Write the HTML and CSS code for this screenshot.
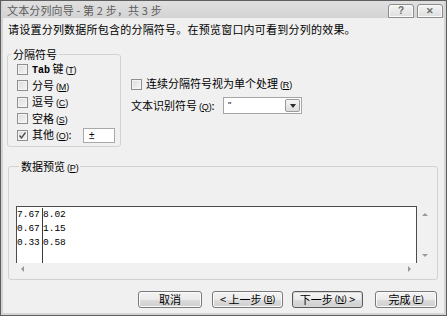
FILE: index.html
```html
<!DOCTYPE html>
<html lang="zh-CN">
<head>
<meta charset="utf-8">
<title>文本分列向导</title>
<link rel="stylesheet" href="styles.css">
</head>
<body>
<div class="window">
  <div class="titlebar">
    <span class="title">文本分列向导 - 第 2 步，共 3 步</span>
    <div class="tbtns">
      <span class="tbtn">?</span>
      <span class="tbtn close">✕</span>
    </div>
  </div>
  <div class="content">
    <p class="intro">请设置分列数据所包含的分隔符号。在预览窗口内可看到分列的效果。</p>
    <div class="top">
      <fieldset class="group delim">
        <legend>分隔符号</legend>
        <div class="rows">
          <div class="row"><span class="cb"></span><span class="lbl"><span class="lat">Tab</span> 键<span class="mn">(<u>T</u>)</span></span></div>
          <div class="row"><span class="cb"></span><span class="lbl">分号<span class="mn">(<u>M</u>)</span></span></div>
          <div class="row"><span class="cb"></span><span class="lbl">逗号<span class="mn">(<u>C</u>)</span></span></div>
          <div class="row"><span class="cb"></span><span class="lbl">空格<span class="mn">(<u>S</u>)</span></span></div>
          <div class="row"><span class="cb checked"><svg viewBox="0 0 11 11" width="11" height="11"><path d="M2.5 5.5 L4.5 8 L8.5 2.5" fill="none" stroke="#4a4a4a" stroke-width="1.3"/></svg></span><span class="lbl">其他<span class="mn">(<u>O</u>)</span>:</span><span class="other">±</span></div>
        </div>
      </fieldset>
      <div class="options">
        <div class="opt"><span class="cb"></span><span class="lbl">连续分隔符号视为单个处理<span class="mn">(<u>R</u>)</span></span></div>
        <div class="opt"><span class="qlbl">文本识别符号<span class="mn">(<u>Q</u>)</span>:</span><span class="select"><span class="sval">"</span><span class="sbtn"><span class="tri down dark"></span></span></span></div>
      </div>
    </div>
    <fieldset class="group preview">
      <legend>数据预览<span class="mn">(<u>P</u>)</span></legend>
      <div class="listbox">
        <div class="data">
          <div class="col c1"><div>7.67</div><div>0.67</div><div>0.33</div></div>
          <div class="col c2"><div>8.02</div><div>1.15</div><div>0.58</div></div>
        </div>
        <div class="vscroll"><span class="tri up"></span><span class="tri down"></span></div>
        <div class="hscroll"><span class="tri left"></span><span class="tri right"></span></div>
        <div class="corner"></div>
      </div>
    </fieldset>
    <div class="buttons">
      <span class="btn b-cancel">取消</span>
      <span class="btn b-prev">&lt; 上一步<span class="mn">(<u>B</u>)</span></span>
      <span class="btn b-next default">下一步<span class="mn">(<u>N</u>)</span>&nbsp;&gt;</span>
      <span class="btn b-finish">完成<span class="mn">(<u>F</u>)</span></span>
    </div>
  </div>
</div>
</body>
</html>
```

FILE: styles.css
```css
* { box-sizing: border-box; }
html, body { margin: 0; padding: 0; }
body {
  width: 447px;
  height: 316px;
  overflow: hidden;
  font-family: "Noto Sans CJK SC", "Noto Sans", sans-serif;
  font-size: 11px;
  color: #000;
  background: #f0f0f0;
}
.window {
  width: 447px;
  height: 316px;
  border: 1px solid #5e5e5e;
  background: #d4d4d4;
  padding: 0 2px 2px 2px;
  display: flex;
  flex-direction: column;
}
.titlebar {
  height: 17px;
  display: flex;
  justify-content: space-between;
  align-items: center;
  padding-left: 4px;
  background: linear-gradient(#e0e0e0, #d3d3d3);
}
.title {
  color: #5c5c5c;
  font-size: 11px;
  line-height: 12px;
  letter-spacing: 0.15px;
}
.tbtns {
  align-self: flex-end;
  display: flex;
  gap: 3px;
  margin-right: 1px;
}
.tbtn {
  width: 26px;
  height: 14px;
  border: 1px solid #8c8c8c;
  border-radius: 3px 3px 0 0;
  background: linear-gradient(#f4f4f4, #dedede);
  box-shadow: inset 0 0 0 1px #fafafa;
  display: flex;
  align-items: center;
  justify-content: center;
  color: #6a6a6a;
  font-family: "Liberation Sans", sans-serif;
  font-size: 10px;
  font-weight: bold;
  line-height: 1;
}
.tbtn.close { font-size: 9px; }
.content {
  flex: 1;
  background: #f0f0f0;
  padding: 4px 6px 0 4px;
  display: flex;
  flex-direction: column;
}
.intro {
  margin: 0;
  padding-left: 1px;
  line-height: 14px;
  font-size: 11px;
  letter-spacing: 0.22px;
}
.top {
  display: flex;
  margin-top: 12px;
}
.group {
  margin: 0;
  padding: 0;
  border: 1px solid #d2d2d2;
  border-radius: 3px;
  min-width: 0;
}
.group legend {
  padding: 0 2px;
  margin-left: 3px;
  line-height: 12px;
  font-size: 11px;
}
.delim {
  width: 114px;
  padding-bottom: 2px;
}
.rows { padding-top: 1px; }
.row {
  height: 16.5px;
  display: flex;
  align-items: center;
  padding-left: 9px;
  padding-right: 5px;
}
.cb {
  width: 11px;
  height: 11px;
  flex: none;
  border: 1px solid #8e8e8e;
  background: linear-gradient(135deg, #dcdcdc, #f6f6f6);
  box-shadow: inset 0 0 0 1px #f4f4f4;
  margin-right: 4px;
  position: relative;
}
.cb svg { position: absolute; left: -1px; top: -1px; }
.lbl { line-height: 12px; white-space: nowrap; }
.lat { font-family: "Liberation Mono", monospace; font-size: 10px; font-weight: bold; }
.mn {
  font-family: "Liberation Sans", sans-serif;
  font-size: 9px;
  letter-spacing: -0.2px;
  margin-left: 2px;
}
.other {
  margin-left: auto;
  width: 32px;
  height: 15px;
  background: #fff;
  border: 1px solid #a9a9a9;
  font-family: "Liberation Sans", sans-serif;
  font-size: 10px;
  line-height: 13px;
  padding-left: 5px;
}
.options {
  margin-left: 10px;
  margin-top: 27.5px;
  display: flex;
  flex-direction: column;
}
.opt {
  height: 17px;
  display: flex;
  align-items: center;
}
.opt + .opt { margin-top: 4.5px; }
.qlbl { width: 92px; line-height: 12px; white-space: nowrap; }
.select {
  width: 79px;
  height: 17px;
  background: #fff;
  border: 1px solid #a5a5a5;
  display: flex;
  justify-content: space-between;
  padding: 1px;
}
.sval {
  font-family: "Liberation Sans", sans-serif;
  font-size: 9px;
  line-height: 12px;
  padding-left: 3px;
}
.sbtn {
  width: 15px;
  height: 13px;
  border: 1px solid #9a9a9a;
  border-radius: 2px;
  background: linear-gradient(#f6f6f6, #dcdcdc);
  display: flex;
  align-items: center;
  justify-content: center;
}
.tri {
  width: 0;
  height: 0;
  display: block;
}
.tri.up { border-left: 3px solid transparent; border-right: 3px solid transparent; border-bottom: 3px solid #9a9a9a; }
.tri.down { border-left: 3px solid transparent; border-right: 3px solid transparent; border-top: 3px solid #9a9a9a; }
.tri.down.dark { border-left-width: 3.5px; border-right-width: 3.5px; border-top: 4px solid #2a2a2a; }
.tri.left { border-top: 3px solid transparent; border-bottom: 3px solid transparent; border-right: 3px solid #9a9a9a; }
.tri.right { border-top: 3px solid transparent; border-bottom: 3px solid transparent; border-left: 3px solid #9a9a9a; }
.preview {
  margin-top: 13px;
  margin-left: 1px;
  width: 430px;
  padding: 0 5px 2px 7px;
}
.listbox {
  margin-top: 32px;
  width: 416px;
  height: 71px;
  display: grid;
  grid-template-columns: 1fr 15px;
  grid-template-rows: 1fr 14px;
}
.data {
  background: #fff;
  border: 1px solid #4c4c4c;
  border-bottom: none;
  display: flex;
  font-family: "Liberation Mono", monospace;
  font-size: 9.5px;
  line-height: 14px;
  padding-top: 1px;
}
.col.c1 {
  width: 26px;
  border-right: 1px solid #3c3c3c;
}
.vscroll {
  background: #f1f1f1;
  display: flex;
  flex-direction: column;
  justify-content: space-between;
  align-items: center;
  padding: 7px 0 6px;
}
.hscroll {
  background: #f1f1f1;
  display: flex;
  justify-content: space-between;
  align-items: center;
  padding: 0 6px 1px 5px;
}
.corner { background: #f1f1f1; }
.buttons {
  margin-top: 11px;
  display: flex;
  justify-content: flex-end;
  padding-right: 1px;
}
.btn {
  height: 17px;
  border: 1px solid #7a7a7a;
  border-radius: 3px;
  background: linear-gradient(#f4f4f4 0%, #ebebeb 50%, #dcdcdc 51%, #cfcfcf 100%);
  box-shadow: inset 0 0 0 1px #fbfbfb;
  display: flex;
  align-items: center;
  justify-content: center;
  line-height: 12px;
  font-size: 11px;
  white-space: nowrap;
}
.b-cancel { width: 64px; margin-right: 10px; }
.b-prev { width: 71px; margin-right: 9px; }
.b-next { width: 71px; margin-right: 12px; }
.b-finish { width: 62px; }
.btn.default { border-color: #5a5a5a; box-shadow: inset 0 0 0 1px #d8d8d8; }
```
